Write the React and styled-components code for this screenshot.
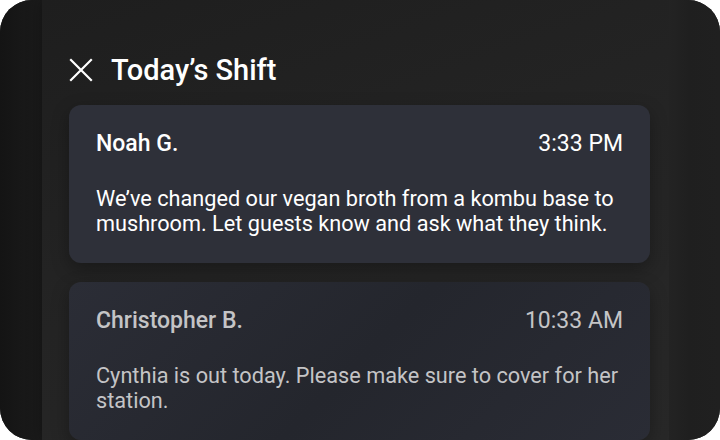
import styled, { createGlobalStyle } from "styled-components";

const GlobalStyle = createGlobalStyle`
  html, body {
    margin: 0;
    padding: 0;
    background: #ffffff;
  }
  body {
    font-family: Roboto, "Liberation Sans", sans-serif;
  }
`;

const messages = [
  {
    name: "Noah G.",
    time: "3:33 PM",
    text: "We’ve changed our vegan broth from a kombu base to mushroom. Let guests know and ask what they think.",
    read: false,
  },
  {
    name: "Christopher B.",
    time: "10:33 AM",
    text: "Cynthia is out today. Please make sure to cover for her station.",
    read: true,
  },
];

const App = () => {
  return (
    <>
      <GlobalStyle />
      <Frame>
        <Gutter />
        <Sheet>
          <Header>
            <CloseButton aria-label="Close">
              <svg width="24" height="24" viewBox="0 0 24 24" fill="none">
                <path d="M2 2L22 22M22 2L2 22" stroke="#ffffff" strokeWidth="2.2" strokeLinecap="square" />
              </svg>
            </CloseButton>
            <Title>Today’s Shift</Title>
          </Header>
          <List>
            {messages.map((m, i) => (
              <Card key={i} $read={m.read}>
                <CardTop>
                  <Name>{m.name}</Name>
                  <Time>{m.time}</Time>
                </CardTop>
                <Body>{m.text}</Body>
              </Card>
            ))}
          </List>
        </Sheet>
        <RightGutter />
      </Frame>
    </>
  );
};

const Frame = styled.div`
  width: 720px;
  height: 440px;
  border-radius: 32px;
  overflow: hidden;
  display: flex;
  background: #1d1d1d;
`;

const Gutter = styled.div`
  width: 42px;
  flex-shrink: 0;
  background: linear-gradient(90deg, #141414 0%, #1b1b1b 100%);
`;

const RightGutter = styled.div`
  width: 51px;
  flex-shrink: 0;
  background: linear-gradient(90deg, #232323 0%, #1f1f1f 40%, #202020 100%);
`;

const Sheet = styled.div`
  flex: 1;
  display: flex;
  flex-direction: column;
  padding: 0 19px 0 27px;
  background: linear-gradient(160deg, #1e1e1e 0%, #242424 50%, #282828 100%);
  box-shadow: 0 0 14px rgba(0, 0, 0, 0.35);
`;

const Header = styled.div`
  display: flex;
  align-items: center;
  gap: 18px;
  height: 54px;
  margin-top: 50px;
  margin-bottom: 15px;
`;

const CloseButton = styled.div`
  width: 24px;
  height: 24px;
  display: flex;
`;

const Title = styled.h1`
  margin: 0;
  color: #ffffff;
  font-size: 29px;
  font-weight: 500;
`;

const List = styled.div`
  display: flex;
  flex-direction: column;
  gap: 19px;
`;

const Card = styled.div`
  border-radius: 12px;
  padding: 27px;
  background: ${p => (p.$read
    ? "linear-gradient(135deg, #2b2d36 0%, #24262d 50%, #2a2c35 100%)"
    : "#2e3039")};
  box-shadow: 0 6px 18px rgba(0, 0, 0, 0.3);
  color: ${p => (p.$read ? "#c4c4c6" : "#ffffff")};
`;

const CardTop = styled.div`
  display: flex;
  justify-content: space-between;
  align-items: center;
  line-height: 24px;
  margin-bottom: 30px;
`;

const Name = styled.span`
  font-size: 23px;
  font-weight: 500;
`;

const Time = styled.span`
  font-size: 23px;
  font-weight: 400;
`;

const Body = styled.p`
  margin: 0;
  font-size: 21.7px;
  line-height: 25px;
`;

export default App;
